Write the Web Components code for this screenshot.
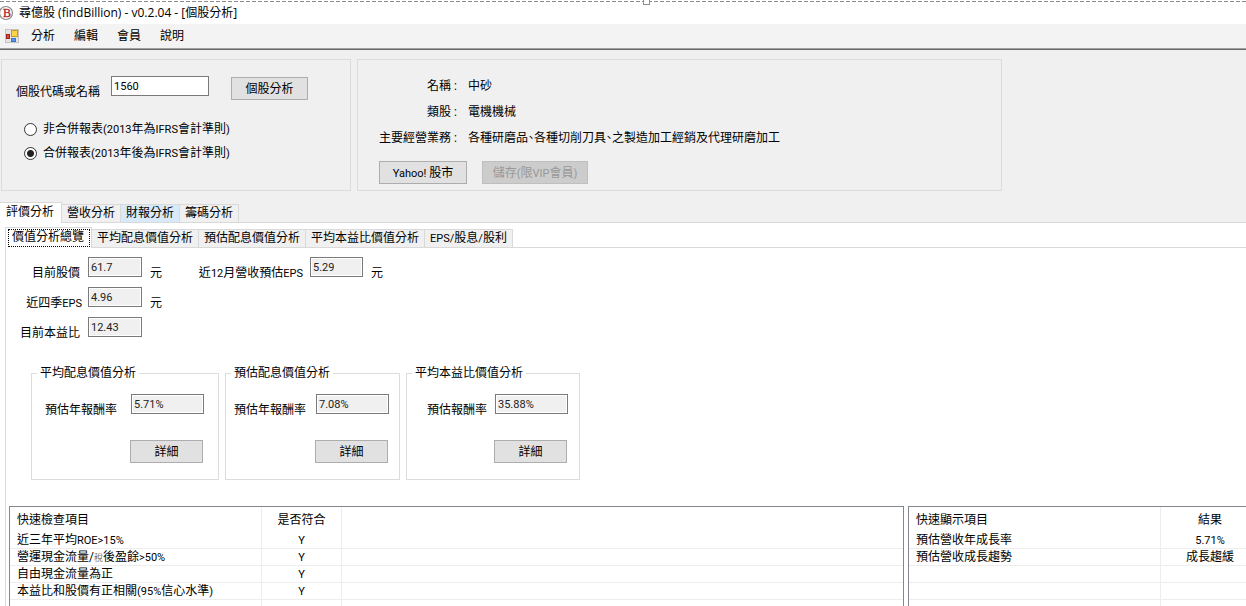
<!DOCTYPE html>
<html lang="zh-Hant">
<head>
<meta charset="utf-8">
<title>尋億股 (findBillion)</title>
<style>
html, body { margin: 0; height: 100%; overflow: hidden; }
body { background: #fff; color: #000; font: 12px/16px Roboto, "Noto Sans CJK TC", sans-serif; }
</style>
</head>
<body>
<app-window></app-window>

<script>
const define = (name, html, setup) => customElements.define(name, class extends HTMLElement {
  constructor() {
    super();
    this.attachShadow({ mode: 'open' }).innerHTML = html;
  }
  connectedCallback() {
    if (setup && !this.ready) { this.ready = true; setup(this, this.shadowRoot); }
  }
});

/* Latin letters and digits set one size below the Chinese text. */
define('latin-run', `<style>:host { display: inline; font-size: 11px; line-height: 12px; }</style><slot></slot>`);

define('title-bar', `
<style>
:host { display: block; position: relative; height: 24px; background: #fff; }
.edge { position: absolute; left: 0; right: 0; top: 1px; height: 1px;
  background: repeating-linear-gradient(90deg, #8c8c8c 0 4px, #fff 4px 6px); }
.grip { position: absolute; left: 643px; top: -2px; width: 5px; height: 5px; background: #fff; border: 1px solid #8c8c8c; }
.row { display: flex; align-items: center; gap: 4px; padding-top: 4px; }
h1 { margin: 0; font: 12px/18px "Open Sans", "Noto Sans CJK TC", sans-serif; white-space: nowrap; }
svg { display: block; }
</style>
<div class="edge"></div><div class="grip"></div>
<div class="row">
<svg width="15" height="16" viewBox="0 0 15 16" aria-hidden="true">
<circle cx="6" cy="8" r="6.500" fill="#fff" stroke="#888" stroke-width="1.200"/>
<text x="3" y="12" font-family="Liberation Serif, serif" font-size="12" fill="#b3202a" stroke="#b3202a" stroke-width=".3">B</text>
</svg>
<h1><slot></slot></h1></div>`);

define('menu-bar', `
<style>
:host { display: flex; align-items: center; height: 24px; padding-left: 5px; background: #f3f3f3;
  border-bottom: 1px solid #a0a0a0; box-shadow: 0 1px #696969; margin-bottom: 1px; }
svg { display: block; margin-right: 2px; }
nav { display: flex; }
button { all: unset; padding: 0 9px 0 10px; line-height: 20px; }
</style>
<svg width="14" height="14" viewBox="0 0 14 14" aria-hidden="true">
<rect x=".5" y=".5" width="13" height="13" fill="#e4e4e4" stroke="#c4c4c4"/>
<rect x="6.500" y="1.500" width="6" height="6" fill="#ffd34a" stroke="#c79a1d"/>
<rect x="1.500" y="5.500" width="3" height="4" fill="#d84a3a" stroke="#a3231b"/>
<rect x="6.500" y="9.500" width="4" height="3" fill="#5b97ea" stroke="#3a74cd"/>
</svg>
<nav><button>分析</button><button>編輯</button><button>會員</button><button>說明</button></nav>`);

define('push-button', `
<style>
:host { display: block; }
button { display: block; box-sizing: border-box; width: 100%; height: 23px; padding: 0; margin: 0; border: 1px solid #adadad;
  border-radius: 0; background: #e1e1e1; color: #000; font: inherit; line-height: 20px; white-space: nowrap; }
button:disabled { background: #ccc; border-color: #bfbfbf; color: #999; }
</style>
<button><slot></slot></button>`, (host, root) => {
  root.querySelector('button').disabled = host.hasAttribute('disabled');
});

/* A caption that sits slightly below its text box, with an optional unit. */
define('value-field', `
<style>
:host { display: flex; align-items: flex-start; height: 24px; }
label, span { padding-top: 8px; line-height: 16px; white-space: nowrap; }
label { width: var(--label, auto); text-align: right; margin-right: var(--gap, 8px); }
input { box-sizing: border-box; width: var(--box, 54px); height: 20px; margin: 0; padding: 0 2px; border: 1px solid #7a7a7a;
  border-radius: 0; outline: none; background: #fff; color: #000; font: inherit; font-size: 11px; }
input:read-only { background: #f0f0f0; box-shadow: inset 0 0 0 1px #fff; color: #222; }
span { margin-left: 8px; }
</style>
<label for="box"><slot></slot></label><input id="box"><span></span>`, (host, root) => {
  const box = root.querySelector('input');
  box.value = host.getAttribute('value');
  box.readOnly = !host.hasAttribute('editable');
  const unit = root.querySelector('span');
  if (host.hasAttribute('unit')) unit.textContent = host.getAttribute('unit'); else unit.remove();
});

define('report-choice', `
<style>
:host { display: flex; flex-direction: column; gap: 8px; }
label { display: flex; align-items: center; gap: 6px; height: 16px; line-height: 16px; white-space: nowrap; }
input { appearance: none; box-sizing: border-box; width: 13px; height: 13px; margin: 0; border: 1px solid #333; border-radius: 50%; background: #fff; }
input:checked { background: radial-gradient(circle, #222 0 3px, #fff 4px); }
</style>
<label><input type="radio" name="report"><span>非合併報表<latin-run>(2013</latin-run>年為<latin-run>IFRS</latin-run>會計準則<latin-run>)</latin-run></span></label>
<label><input type="radio" name="report" checked><span>合併報表<latin-run>(2013</latin-run>年後為<latin-run>IFRS</latin-run>會計準則<latin-run>)</latin-run></span></label>`);

define('query-panel', `
<style>
:host { display: block; box-sizing: border-box; border: 1px solid #dcdcdc; padding: 16px 0 0 14px; }
.row { display: flex; gap: 22px; margin-bottom: 21px; }
value-field { --gap: 11px; --box: 98px; }
push-button { width: 77px; padding-top: 1px; }
report-choice { padding-left: 8px; }
</style>
<div class="row"><value-field value="1560" editable>個股代碼或名稱</value-field><push-button>個股分析</push-button></div>
<report-choice></report-choice>`);

define('company-panel', `
<style>
:host { display: block; box-sizing: border-box; border: 1px solid #dcdcdc; padding: 18px 0 0 21px; }
dl { display: grid; grid-template-columns: 78px 1fr; column-gap: 11px; row-gap: 10px; margin: 0 0 15px; white-space: nowrap; }
dt { text-align: right; }
dd { margin: 0; font-feature-settings: "halt"; }
.row { display: flex; gap: 15px; }
.a { width: 88px; } .b { width: 106px; }
</style>
<dl><dt>名稱 :</dt><dd>中砂</dd><dt>類股 :</dt><dd>電機機械</dd>
<dt>主要經營業務 :</dt><dd>各種研磨品、各種切削刀具、之製造加工經銷及代理研磨加工</dd></dl>
<div class="row"><push-button class="a"><latin-run>Yahoo! </latin-run>股市</push-button><push-button class="b" disabled>儲存<latin-run>(</latin-run>限<latin-run>VIP</latin-run>會員<latin-run>)</latin-run></push-button></div>`);

define('tab-strip', `
<style>
:host { display: flex; align-items: flex-end; height: 21px; box-shadow: inset 0 -1px #d9d9d9; }
</style><slot></slot>`, host => host.setAttribute('role', 'tablist'));

define('tab-item', `
<style>
:host { display: block; }
button { display: block; box-sizing: border-box; height: 19px; margin: 0; padding: 0 5px; border: 1px solid #d9d9d9; border-left: 0;
  border-radius: 0; background: #f0f0f0; color: #000; font: inherit; line-height: 17px; white-space: nowrap; }
:host([hot]) button { background: #d8eaf9; }
:host([selected]) button { height: 21px; background: #fff; border-bottom: 0; padding: 0 7px 2px 6px; line-height: 18px; }
:host([framed]) button { position: relative; padding: 0 7px 2px 6px; border-left: 1px solid #d9d9d9; }
:host([framed]) button::after { content: ""; position: absolute; inset: 1px 1px 1px 2px; border: 1px dotted #000; }
</style>
<button role="tab"><slot></slot></button>`, (host, root) => {
  root.querySelector('button').setAttribute('aria-selected', host.hasAttribute('selected'));
});

define('return-card', `
<style>
:host { display: block; }
fieldset { box-sizing: border-box; height: 115px; margin: 0; padding: 0 0 0 5px; border: 1px solid #dcdcdc; }
legend { padding: 0 3px; line-height: 16px; white-space: nowrap; }
.body { display: flex; flex-direction: column; align-items: flex-end; gap: 22px; padding: 13px var(--right, 11px) 0 0; }
value-field { --box: 73px; }
push-button { width: 73px; margin-right: 1px; }
</style>
<fieldset><legend></legend><div class="body"><value-field><slot></slot></value-field><push-button>詳細</push-button></div></fieldset>`, (host, root) => {
  root.querySelector('legend').textContent = host.getAttribute('heading');
  const field = root.querySelector('value-field');
  field.shadowRoot.querySelector('input').value = host.getAttribute('value');
});

const listStyle = `<style>
:host { display: block; border: 1px solid #828790; border-bottom: 0; overflow: hidden; }
table { border-collapse: separate; border-spacing: 0; table-layout: fixed; width: 100%; }
th, td { box-sizing: border-box; padding: 0; border-right: 1px solid #ededed; font-weight: normal; text-align: center; white-space: nowrap; }
th { height: 25px; }
td { height: 17px; line-height: 16px; border-bottom: 1px solid #ededed; }
th:first-child, td:first-child { text-align: left; padding-left: 7px; }
th:last-child, td:last-child { border-right: 0; }
small { font-size: 9px; line-height: 9px; color: #777; }
.name { width: 252px; } .flag { width: 80px; } .result { width: 98px; }
</style>`;

define('check-list', listStyle + `
<table><colgroup><col class="name"><col class="flag"><col></colgroup>
<thead><tr><th>快速檢查項目</th><th>是否符合</th><th></th></tr></thead>
<tbody>
<tr><td>近三年平均<latin-run>ROE&gt;15%</latin-run></td><td><latin-run>Y</latin-run></td><td></td></tr>
<tr><td>營運現金流量/<small>稅</small>後盈餘<latin-run>&gt;50%</latin-run></td><td><latin-run>Y</latin-run></td><td></td></tr>
<tr><td>自由現金流量為正</td><td><latin-run>Y</latin-run></td><td></td></tr>
<tr><td>本益比和股價有正相關<latin-run>(95%</latin-run>信心水準<latin-run>)</latin-run></td><td><latin-run>Y</latin-run></td><td></td></tr>
<tr><td></td><td></td><td></td></tr>
</tbody></table>`);

define('result-list', listStyle + `
<style>:host { border-right: 0; } table { width: 350px; }</style>
<table><colgroup><col class="name"><col class="result"></colgroup>
<thead><tr><th>快速顯示項目</th><th>結果</th></tr></thead>
<tbody>
<tr><td>預估營收年成長率</td><td><latin-run>5.71%</latin-run></td></tr>
<tr><td>預估營收成長趨勢</td><td>成長趨緩</td></tr>
<tr><td></td><td></td></tr><tr><td></td><td></td></tr><tr><td></td><td></td></tr>
</tbody></table>`);

define('value-overview', `
<style>
:host { display: flex; flex-direction: column; flex: 1; min-height: 0; padding: 9px 0 0 3px; }
.fields, .cards { flex: none; }
.fields { display: grid; grid-template-columns: 177px 1fr; row-gap: 6px; }
.fields value-field { --label: 71px; }
.fields value-field.eps { --label: 73px; --gap: 6px; }
.fields value-field.wide { --label: 117px; --gap: 7px; --box: 53px; }
.cards { display: flex; gap: 6px; margin: 24px 0 26px 22px; }
.c1 { width: 188px; --right: 14px; --gap: 14px; }
.c2 { width: 175px; --right: 10px; --gap: 10px; }
.c3 { width: 174px; --right: 11px; --gap: 8px; }
.lists { display: grid; grid-template-columns: 1fr 338px; column-gap: 4px; flex: 1; min-height: 0; }
</style>
<div class="fields">
<value-field value="61.7" unit="元">目前股價</value-field>
<value-field class="wide" value="5.29" unit="元">近<latin-run>12</latin-run>月營收預估<latin-run>EPS</latin-run></value-field>
<value-field class="eps" value="4.96" unit="元">近四季<latin-run>EPS</latin-run></value-field><i></i>
<value-field value="12.43">目前本益比</value-field>
</div>
<div class="cards">
<return-card class="c1" heading="平均配息價值分析" value="5.71%">預估年報酬率</return-card>
<return-card class="c2" heading="預估配息價值分析" value="7.08%">預估年報酬率</return-card>
<return-card class="c3" heading="平均本益比價值分析" value="35.88%">預估報酬率</return-card>
</div>
<div class="lists"><check-list></check-list><result-list></result-list></div>`);

define('app-window', `
<style>
:host { display: flex; flex-direction: column; height: 100vh; overflow: hidden; background: #f0f0f0; }
title-bar, menu-bar, .top, tab-strip { flex: none; }
.top { display: grid; grid-template-columns: 350px minmax(0, 645px); gap: 6px; height: 132px; padding: 9px 1px 11px; }
.page { display: flex; flex-direction: column; flex: 1; min-height: 0; background: #fff; padding: 4px 0 0 5px; }
value-overview { border-left: 1px solid #d9d9d9; }
</style>
<title-bar>尋億股 (findBillion) - v0.2.04 - [個股分析]</title-bar>
<menu-bar></menu-bar>
<div class="top"><query-panel></query-panel><company-panel></company-panel></div>
<tab-strip><tab-item selected>評價分析</tab-item><tab-item>營收分析</tab-item><tab-item hot>財報分析</tab-item><tab-item>籌碼分析</tab-item></tab-strip>
<div class="page">
<tab-strip><tab-item selected framed>價值分析總覽</tab-item><tab-item>平均配息價值分析</tab-item><tab-item>預估配息價值分析</tab-item><tab-item>平均本益比價值分析</tab-item><tab-item><latin-run>EPS/</latin-run>股息<latin-run>/</latin-run>股利</tab-item></tab-strip>
<value-overview></value-overview>
</div>`);
</script>
</body>
</html>
